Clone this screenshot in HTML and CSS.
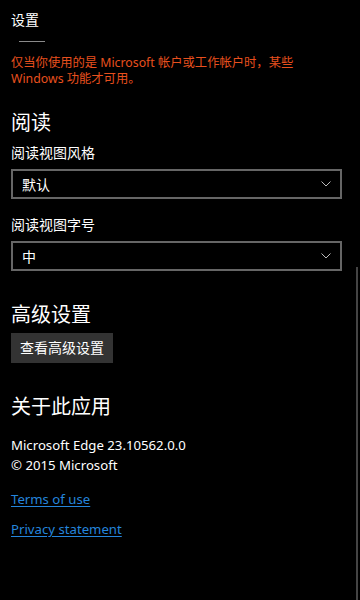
FILE: index.html
```html
<!DOCTYPE html>
<html lang="zh-CN">
<head>
	<meta charset="UTF-8">
	<title>设置</title>
	<link rel="stylesheet" href="styles.css">
</head>
<body>
	<div class="page">
		<div class="title">设置</div>
		<div class="sep"></div>
		<p class="warn"><span>仅当你使用的是 Microsoft 帐户或工作帐户时，某些</span><span>Windows 功能才可用。</span></p>

		<h2 class="head read">阅读</h2>
		<p class="label">阅读视图风格</p>
		<div class="select">
			<span>默认</span>
			<svg width="10" height="6" viewBox="0 0 10 6"><path d="M0.5 0.5 L5 5 L9.5 0.5" fill="none" stroke="#bbb" stroke-width="1"/></svg>
		</div>
		<p class="label label2">阅读视图字号</p>
		<div class="select">
			<span>中</span>
			<svg width="10" height="6" viewBox="0 0 10 6"><path d="M0.5 0.5 L5 5 L9.5 0.5" fill="none" stroke="#bbb" stroke-width="1"/></svg>
		</div>

		<h2 class="head adv">高级设置</h2>
		<a href="javascript:;" class="btn">查看高级设置</a>

		<h2 class="head about">关于此应用</h2>
		<p class="info">Microsoft Edge 23.10562.0.0<br>© 2015 Microsoft</p>
		<a href="javascript:;" class="link link1">Terms of use</a>
		<a href="javascript:;" class="link link2">Privacy statement</a>
	</div>
	<div class="scroll"></div>
</body>
</html>
```
FILE: styles.css
```css
*{margin: 0;padding: 0;box-sizing: border-box;}
html,body{background: #000;}
body{font-family: "Noto Sans", "Noto Sans CJK SC", sans-serif;color: #fff;height: 600px;overflow: hidden;position: relative;}
a{text-decoration: none;}
.page{padding: 0 19px 0 11px;display: flex;flex-direction: column;align-items: flex-start;}
.title{margin-top: 10px;font-size: 14px;line-height: 20px;}
.sep{margin: 11px 0 0 8px;width: 26px;height: 1px;background: #8a8a8a;}
.warn{margin-top: 13px;font-size: 12.3px;color: #e8501e;}
.warn span{display: block;height: 16px;line-height: 16px;}
.head{font-weight: normal;font-size: 20px;line-height: 28px;}
.read{margin-top: 22px;}
.label{margin-top: 6px;font-size: 14px;line-height: 20px;}
.label2{margin-top: 16px;}
.select{margin-top: 6px;width: 331px;height: 30px;border: 2px solid #666;display: flex;align-items: center;justify-content: space-between;padding: 0 9px 0 9px;font-size: 14px;}
.adv{margin-top: 30px;}
.btn{margin-top: 4px;height: 30px;padding: 0 9px;background: #333;color: #fff;font-size: 14px;line-height: 30px;}
.about{margin-top: 30px;}
.info{margin-top: 14px;font-size: 13.2px;line-height: 20px;}
.link{font-size: 13.2px;line-height: 20px;color: #2585dc;text-decoration: underline;text-underline-offset: 2px;}
.link1{margin-top: 14px;}
.link2{margin-top: 10px;}
.scroll{position: absolute;left: 356px;top: 267px;width: 2px;bottom: 0;background: #444;}
```
